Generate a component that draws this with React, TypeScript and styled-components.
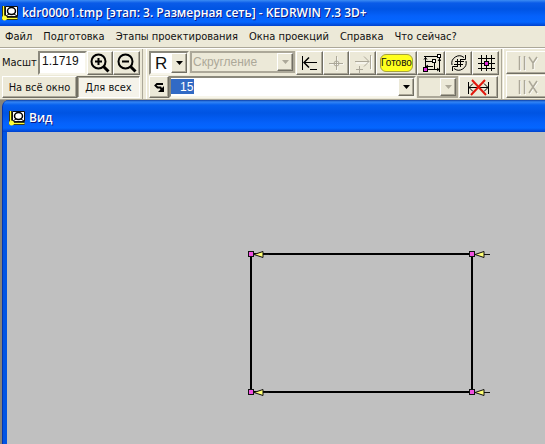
import React, { useState } from 'react';
import styled, { createGlobalStyle, css } from 'styled-components';

const Global = createGlobalStyle`
  * { box-sizing: border-box; }
  html, body { margin: 0; }
  body {
    font-family: "DejaVu Sans Condensed", "Noto Sans", sans-serif;
    font-size: 11px;
    color: #111;
    background: #ece9d8;
  }
  button, input, select { font: inherit; color: inherit; margin: 0; border-radius: 0; outline: none; }
  svg { display: block; flex: none; }
`;

const raised = css`
  border: 1px solid;
  border-color: #fff #716f64 #716f64 #fff;
  box-shadow: inset -1px -1px #aca899;
`;
const sunken = css`
  border: 2px solid;
  border-color: #8a887c #f7f5ea #f7f5ea #8a887c;
`;

const Page = styled.div`
  display: flex;
  flex-direction: column;
  height: 100vh;
  overflow: hidden;
`;

const TitleBar = styled.header`
  display: flex;
  align-items: center;
  gap: 4px;
  height: 26px;
  flex: none;
  padding: 0 2px;
  background: linear-gradient(#3c8cf3 0, #0a5be8 3px, #0054e3 9px, #0561fb 16px, #0466ff 22px, #0041cc 26px);
`;

const Title = styled.h1`
  margin: 0;
  font: 600 12px/16px "Open Sans", sans-serif;
  color: #fff;
  text-shadow: 1px 1px #0a1883;
  white-space: nowrap;
`;

const MenuBar = styled.nav`
  display: flex;
  gap: 11px;
  height: 22px;
  flex: none;
  padding: 0 5px;
  border-bottom: 1px solid #aca899;
`;

const MenuItem = styled.button`
  border: 0;
  padding: 0;
  background: none;
  line-height: 20px;
  white-space: nowrap;
`;

const Toolbar = styled.div`
  display: flex;
  height: 52px;
  flex: none;
  overflow: hidden;
  border-top: 1px solid #fff;
  border-bottom: 1px solid #aca899;
`;

const Group = styled.div`
  display: flex;
  flex-direction: column;
  flex: none;
  gap: 1px;
  padding: 2px 2px 0;
  border-right: 1px solid #aca899;
  & + & { border-left: 1px solid #fff; margin-left: 3px; }
  & + & + & { margin-left: 1px; }
`;

const Row = styled.div<{ $h: number }>`
  display: flex;
  align-items: stretch;
  height: ${p => p.$h}px;
`;

const ToolButton = styled.button<{ $w: number; $pressed?: boolean }>`
  display: flex;
  align-items: center;
  justify-content: center;
  width: ${p => p.$w}px;
  padding: 0;
  white-space: nowrap;
  background: ${p => (p.$pressed ? '#f5f3ea' : '#ece9d8')};
  ${raised}
  ${p => p.$pressed && css`
    border-color: #716f64 #fff #fff #716f64;
    box-shadow: inset 1px 1px #aca899;
  `}
`;

const ScaleLabel = styled.label`
  width: 36px;
  line-height: 24px;
`;

const ScaleInput = styled.input`
  width: 49px;
  padding: 0 2px 4px;
  font-family: "Liberation Sans", sans-serif;
  font-size: 12px;
  background: #fff;
  ${sunken}
`;

const Combo = styled.div<{ $w: number; $disabled?: boolean }>`
  display: flex;
  position: relative;
  width: ${p => p.$w}px;
  margin-right: 1px;
  background: ${p => (p.$disabled ? '#ece9d8' : '#fff')};
  ${sunken}
  ${p => p.$disabled && css`color: #aca899; border-color: #aca899;`}
`;

const OperationCombo = styled(Combo)`
  height: 22px;
`;

const Select = styled.select<{ $large?: boolean }>`
  appearance: none;
  width: 100%;
  border: 0;
  padding: 0 18px 0 ${p => (p.$large ? 4 : 1)}px;
  background: none;
  opacity: 1;
  font-family: "Liberation Sans", sans-serif;
  font-size: ${p => (p.$large ? 17 : 12)}px;
`;

const Arrow = styled.span`
  display: flex;
  align-items: center;
  justify-content: center;
  position: absolute;
  inset: 0 0 0 auto;
  width: 16px;
  background: #ece9d8;
  pointer-events: none;
  ${raised}
`;

const ArrowButton = styled.button`
  display: flex;
  align-items: center;
  justify-content: center;
  width: 16px;
  margin-left: auto;
  padding: 0;
  background: #ece9d8;
  ${raised}
`;

const ValueInput = styled.input`
  width: 23px;
  margin: 1px 0 2px;
  padding: 0 0 0 9px;
  border: 0;
  font-family: "Liberation Sans", sans-serif;
  font-size: 12px;
  color: #fff;
  background: #316ac5;
`;

const Ready = styled.span`
  padding: 0;
  border: 1px solid #a5a23c;
  border-radius: 6px;
  background: #ffff1e;
  font: 10px/16px "Liberation Sans", sans-serif;
  color: #111;
`;

const ChildWindow = styled.section`
  display: flex;
  flex-direction: column;
  flex: 1;
  min-height: 0;
  margin-left: 2px;
  padding-left: 4px;
  border-left: 1px solid #0034b4;
  border-radius: 7px 0 0 0;
  background: #0054e3;
  overflow: hidden;
`;

const Desk = styled.main`
  display: flex;
  flex: 1;
  min-height: 0;
  background: #85837a;
`;

const ChildTitle = styled(TitleBar)`
  height: 32px;
  padding: 3px 3px 0 6px;
  margin-left: -4px;
  background: linear-gradient(#0b3fa9 0, #3385f4 2px, #0660ee 5px, #0054e3 13px, #0561fb 23px, #0466ff 28px, #0041cc 32px);
`;

const Canvas = styled.div`
  flex: 1;
  min-height: 0;
  overflow: hidden;
  background: #c0c0c0;
`;

const AppIcon = () => (
  <svg width="16" height="16" viewBox="0 0 16 16">
    <path d="M3.500 1.500h12v10h-12z" fill="#fff" stroke="#111" />
    <ellipse cx="9.500" cy="6" rx="4" ry="3.500" fill="#fff" stroke="#000" strokeWidth="1.500" />
    <path d="M4 11l3-2M12 9l3 2" stroke="#000" />
    <path d="M1.500 1v12.500h14" fill="none" stroke="#000" strokeWidth="3" />
    <path d="M1.500 1v12.500h14" fill="none" stroke="#ffff38" strokeWidth="1.500" />
    <circle cx="2.500" cy="13" r="2.500" fill="#ffff38" />
  </svg>
);

const Down = ({ off }: { off?: boolean }) => (
  <svg width="7" height="4" viewBox="0 0 7 4"><path d="M0 0h7L3.500 4z" fill={off ? '#aca899' : '#000'} /></svg>
);

const Zoom = ({ plus }: { plus?: boolean }) => (
  <svg width="20" height="20" viewBox="0 0 20 20" fill="none" stroke="#000">
    <circle cx="8.500" cy="8.500" r="7" strokeWidth="2" />
    <path d="M5 8.500h7" strokeWidth="2" />
    {plus && <path d="M8.500 5v7" strokeWidth="2" />}
    <path d="M13.500 13.500l5 5" strokeWidth="3" />
  </svg>
);

const ToStart = () => (
  <svg width="18" height="18" viewBox="0 0 18 18" fill="none" stroke="#000">
    <path d="M1.500 2v14M3 8.500h13M9 15.500h7" />
    <path d="M8 3.500l-5 5 5 5" strokeWidth="1.500" />
  </svg>
);

const Centre = () => (
  <svg width="18" height="18" viewBox="0 0 18 18" fill="none">
    <path d="M10 3v14M3 10h14" stroke="#fff" />
    <path d="M9.500 2v14M2 9.500h14" stroke="#aca899" />
    <circle cx="9.500" cy="9.500" r="2.500" stroke="#aca899" />
  </svg>
);

const ToEnd = () => (
  <svg width="20" height="20" viewBox="0 0 20 20" fill="none">
    <path d="M18.500 3v14M3 10h13" stroke="#fff" />
    <path d="M17.500 2v14M2 8.500h14M11 3.500l5 5-5 5M3 16.500h7M6.500 13v7" stroke="#aca899" />
  </svg>
);

const Frame = () => (
  <svg width="19" height="19" viewBox="0 0 19 19" fill="none" stroke="#000">
    <path d="M3.500 2v13M17.500 4v14M2 2.500h14M4 12.500h7M4 15.500h14M12.500 8v8M4 7.500h7" />
    <path d="M2 5.500l1.500-2 1.500 2M16 7l1.500-2 1.500 2M15 14l2 1.500-2 1.500M6 11l-2 1.500 2 1.500" />
    <rect x="15.500" y="0.500" width="3" height="3" fill="#fff" />
    <rect x="10.500" y="5.500" width="3" height="3" fill="#fff" />
    <rect x="1.500" y="13.500" width="4" height="4" fill="#e02bdc" />
  </svg>
);

const Rotate = () => (
  <svg width="18" height="18" viewBox="0 0 18 18" fill="none" stroke="#000">
    <path d="M2 11A7.500 7.500 0 0 1 14 3.500M16 7A7.500 7.500 0 0 1 4 14.500" />
    <path d="M15.500 1v4.500H11M2.500 17v-4.500H7" />
    <path d="M5 7.500h9M4 10.500h9M7.500 5v8M10.500 5v8" />
  </svg>
);

const Grid = () => (
  <svg width="18" height="18" viewBox="0 0 18 18" fill="none" stroke="#000">
    <path d="M4.500 1v16M9.500 1v16M14.500 1v16M1 4.500h17M1 9.500h17M1 14.500h17" />
    <rect x="7.500" y="7.500" width="4" height="4" fill="#e02bdc" />
  </svg>
);

const Swirl = () => (
  <svg width="11" height="11" viewBox="0 0 11 11" fill="none" stroke="#000" strokeWidth="2">
    <path d="M9 2H3L1.500 3.500l2 2h3L8 8" />
    <path d="M10 4v6H4z" fill="#000" stroke="none" />
  </svg>
);

const NoSize = () => (
  <svg width="24" height="17" viewBox="0 0 24 17" fill="none" stroke="#000">
    <path d="M1.500 3v12M21.500 3v12M2 8.500h19M6 4.500l-4 4 4 4M17 4.500l4 4-4 4" />
    <path d="M5 1l14 15M18 1L4 16" stroke="#e3170c" strokeWidth="2" />
  </svg>
);

const Axis = ({ d }: { d: string }) => (
  <svg width="22" height="16" viewBox="0 0 22 16" fill="none">
    <path d={`M2.500 1v14M7.500 1v14${d}`} stroke="#fff" transform="translate(1 1)" />
    <path d={`M2.500 1v14M7.500 1v14${d}`} stroke="#aca899" strokeWidth="1.500" />
  </svg>
);

const corners = [[244, 122], [465, 122], [244, 260], [465, 260]];

const Drawing = () => (
  <svg width="538" height="312" viewBox="0 0 538 312" role="img" aria-label="Вид">
    <rect x="244" y="122" width="221" height="138" fill="none" stroke="#000" strokeWidth="2" />
    {corners.map(([x, y]) => (
      <g key={`${x}-${y}`} stroke="#111">
        <path d={`M${x + 3} ${y + 0.5}h15`} />
        <path d={`M${x + 3} ${y + 0.5}l9 -3v6z`} fill="#ffff75" />
        <rect x={x - 2.5} y={y - 2.5} width="5" height="5" fill="#f050df" />
      </g>
    ))}
  </svg>
);

const menu = ['Файл', 'Подготовка', 'Этапы проектирования', 'Окна проекций', 'Справка', 'Что сейчас?'];

export default function App() {
  const [scale, setScale] = useState('1.1719');
  const [value, setValue] = useState('15');
  return (
    <Page>
      <Global />
      <TitleBar>
        <AppIcon />
        <Title>kdr00001.tmp [этап: 3. Размерная сеть] - KEDRWIN 7.3 3D+</Title>
      </TitleBar>
      <MenuBar>{menu.map(m => <MenuItem key={m}>{m}</MenuItem>)}</MenuBar>
      <Toolbar>
        <Group>
          <Row $h={24}>
            <ScaleLabel htmlFor="scale">Масшт</ScaleLabel>
            <ScaleInput id="scale" value={scale} onChange={e => setScale(e.target.value)} />
            <ToolButton $w={26} aria-label="Увеличить"><Zoom plus /></ToolButton>
            <ToolButton $w={27} aria-label="Уменьшить"><Zoom /></ToolButton>
          </Row>
          <Row $h={22}>
            <ToolButton $w={75}>На всё окно</ToolButton>
            <ToolButton $w={63} $pressed aria-pressed="true">Для всех</ToolButton>
          </Row>
        </Group>
        <Group>
          <Row $h={24}>
            <Combo $w={40}>
              <Select $large aria-label="Тип"><option>R</option></Select>
              <Arrow><Down /></Arrow>
            </Combo>
            <OperationCombo $w={105} $disabled>
              <Select disabled aria-label="Операция"><option>Скругление</option></Select>
              <Arrow><Down off /></Arrow>
            </OperationCombo>
            <ToolButton $w={27} aria-label="В начало"><ToStart /></ToolButton>
            <ToolButton $w={26} disabled aria-label="Центр"><Centre /></ToolButton>
            <ToolButton $w={27} disabled aria-label="В конец"><ToEnd /></ToolButton>
            <ToolButton $w={41}><Ready>Готово</Ready></ToolButton>
            <ToolButton $w={28} aria-label="Рамка"><Frame /></ToolButton>
            <ToolButton $w={27} aria-label="Поворот"><Rotate /></ToolButton>
            <ToolButton $w={27} aria-label="Сетка"><Grid /></ToolButton>
          </Row>
          <Row $h={22}>
            <ToolButton $w={20} aria-label="Сменить"><Swirl /></ToolButton>
            <Combo $w={247}>
              <ValueInput aria-label="Значение" value={value} onChange={e => setValue(e.target.value)} />
              <ArrowButton aria-label="Список значений"><Down /></ArrowButton>
            </Combo>
            <Combo $w={41} $disabled>
              <Select disabled aria-label="Допуск"><option /></Select>
              <Arrow><Down off /></Arrow>
            </Combo>
            <ToolButton $w={39} aria-label="Удалить размер"><NoSize /></ToolButton>
          </Row>
        </Group>
        <Group>
          <Row $h={23}><ToolButton $w={44} disabled aria-label="Y"><Axis d="M12 2l4 6 4-6M16 8v6" /></ToolButton></Row>
          <Row $h={23}><ToolButton $w={44} disabled aria-label="X"><Axis d="M12 2l8 12M20 2l-8 12" /></ToolButton></Row>
        </Group>
      </Toolbar>
      <Desk>
        <ChildWindow>
          <ChildTitle as="div">
            <AppIcon />
            <Title as="h2">Вид</Title>
          </ChildTitle>
          <Canvas><Drawing /></Canvas>
        </ChildWindow>
      </Desk>
    </Page>
  );
}
